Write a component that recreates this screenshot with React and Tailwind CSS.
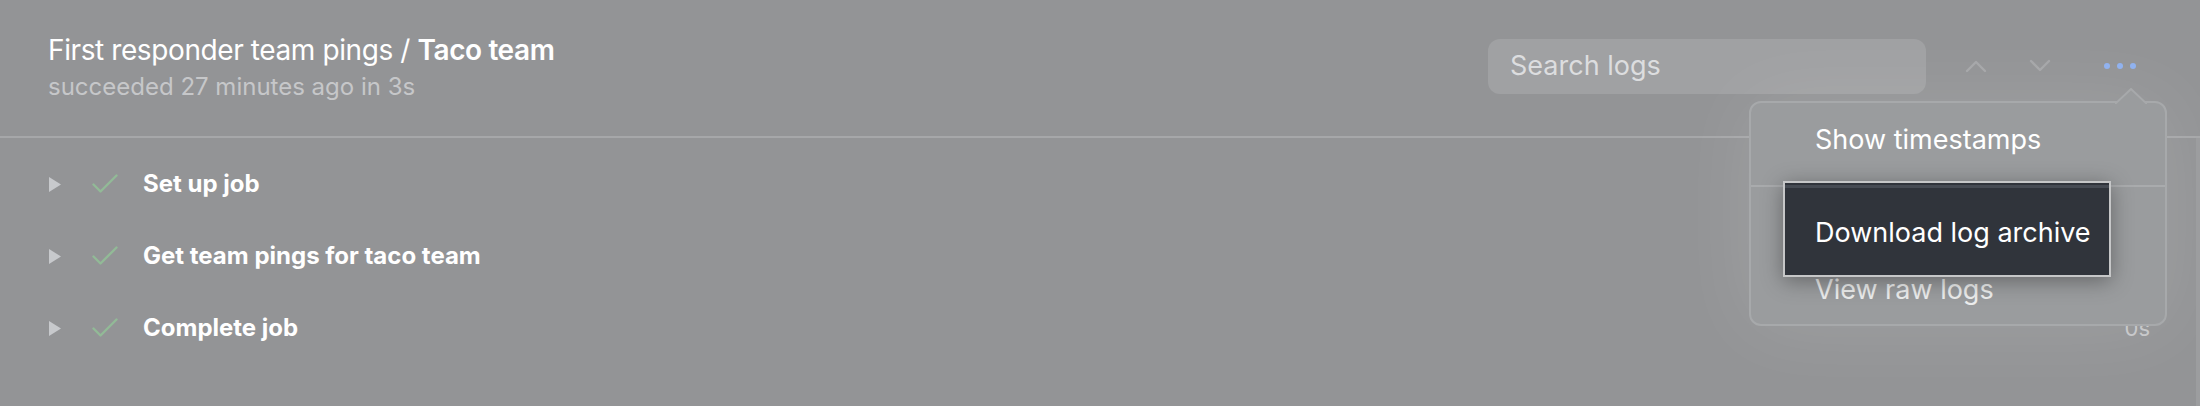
import React from "react";

const steps = [
  { name: "Set up job", time: "0s" },
  { name: "Get team pings for taco team", time: "1s" },
  { name: "Complete job", time: "0s" },
];

const Caret = () => (
  <svg width="14" height="15" viewBox="0 0 14 15" className="shrink-0">
    <path d="M1 0 L13 7.5 L1 15 Z" fill="#c7c9cc" />
  </svg>
);

const Check = () => (
  <svg width="26" height="20" viewBox="0 0 26 20" className="shrink-0">
    <path d="M1.5 10.5 L8.5 17.5 L24.5 1.5" fill="none" stroke="#92ba97" strokeWidth="2.4" strokeLinecap="round" strokeLinejoin="round" />
  </svg>
);

const Chevron = ({ up }) => (
  <svg width="22" height="14" viewBox="0 0 22 14">
    <path
      d={up ? "M2 12 L11 3 L20 12" : "M2 2 L11 11 L20 2"}
      fill="none"
      stroke="#a6a7a9"
      strokeWidth="2.4"
      strokeLinecap="round"
      strokeLinejoin="round"
    />
  </svg>
);

export default function App() {
  return (
    <div className="relative w-full h-[406px] overflow-hidden bg-[#939496] font-['Inter',sans-serif]">
      {/* header */}
      <div className="flex items-center justify-between h-[138px] pl-[48px] pr-[64px] border-b-2 border-[#a6a7a9]">
        <div className="flex flex-col gap-[5px] -mt-[1px]">
          <div className="text-[28px] leading-[34px] text-white tracking-[-0.4px]">
            First responder team pings / <span className="font-semibold">Taco team</span>
          </div>
          <div className="text-[24px] leading-[30px] text-[#c6c7c9]">succeeded 27 minutes ago in 3s</div>
        </div>
        <div className="flex items-center -mt-[4px]">
          <div className="flex items-center w-[438px] h-[55px] rounded-[12px] bg-[#a0a1a3] px-[22px] text-[27px] text-[#dcdddf]">
            Search logs
          </div>
          <div className="flex items-center gap-[42px] ml-[39px]">
            <Chevron up />
            <Chevron />
          </div>
          <div className="flex items-center gap-[7px] ml-[53px]">
            <span className="w-[6px] h-[6px] rounded-full bg-[#8fb1ef]" />
            <span className="w-[6px] h-[6px] rounded-full bg-[#8fb1ef]" />
            <span className="w-[6px] h-[6px] rounded-full bg-[#8fb1ef]" />
          </div>
        </div>
      </div>

      {/* steps */}
      <div className="flex flex-col pt-[10px] pl-[48px] pr-[50px]">
        {steps.map((s) => (
          <div key={s.name} className="flex items-center h-[72px]">
            <Caret />
            <div className="ml-[30px]">
              <Check />
            </div>
            <div className="ml-[25px] text-[24px] font-bold text-white">{s.name}</div>
            <div className="ml-auto text-[22px] text-[#c6c7c9]">{s.time}</div>
          </div>
        ))}
      </div>

      {/* menu */}
      <div className="absolute left-[1749px] top-[101px] w-[418px] h-[225px] rounded-[12px] border-2 border-[#a7a9ab] bg-[#9a9c9e] shadow-[0_0_80px_rgba(255,255,255,0.12)]">
        <svg width="32" height="16" viewBox="0 0 32 16" className="absolute -top-[15px] right-[18px]">
          <path d="M0 16 L16 1 L32 16" fill="#9a9c9e" stroke="#a7a9ab" strokeWidth="2" />
        </svg>
        <div className="flex items-center h-[82px] pl-[64px] pb-[8px] text-[27px] text-white">Show timestamps</div>
        <div className="h-[2px] bg-[#a9abad]" />
        <div className="flex items-center h-[88px] pl-[64px] text-[27px] text-white">Download log archive</div>
        <div className="flex items-center h-[30px] pl-[64px] text-[27px] text-[#eceded]">View raw logs</div>
      </div>

      {/* spotlight */}
      <div className="absolute left-[1783px] top-[181px] w-[328px] h-[96px] border-2 border-[#c6c7c8] bg-[#30343b] shadow-[0_4px_20px_rgba(0,0,0,0.35)]">
        <div className="h-[3px] bg-[#464b53] mt-[2px]" />
        <div className="flex items-center h-[87px] pl-[30px] pt-[3px] text-[27px] text-white">Download log archive</div>
      </div>

      <div className="absolute right-0 top-[138px] w-[4px] h-[268px] bg-[#9c9d9f]" />
    </div>
  );
}
